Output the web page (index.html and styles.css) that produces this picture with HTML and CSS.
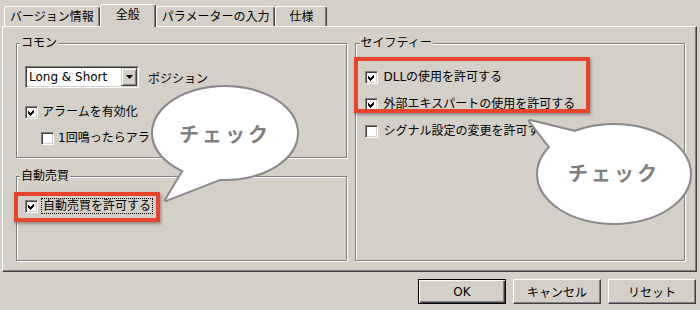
FILE: index.html
```html
<!DOCTYPE html>
<html lang="ja">
<head>
    <meta charset="UTF-8">
    <meta name="viewport" content="width=device-width, initial-scale=1.0">
    <title>全般</title>
    <link rel="stylesheet" href="styles.css">
</head>
<body>
    <div class="dialog">
        <div class="tabs">
            <div class="tab">バージョン情報</div>
            <div class="tab active">全般</div>
            <div class="tab">パラメーターの入力</div>
            <div class="tab short">仕様</div>
        </div>

        <div class="panel">
            <div class="col">
                <fieldset class="group common">
                    <legend>コモン</legend>
                    <div class="select-row">
                        <div class="select">
                            <span class="select-value">Long &amp; Short</span>
                            <span class="select-btn">
                                <svg width="7" height="4" viewBox="0 0 7 4"><polygon points="0,0 7,0 3.5,4" fill="#000"/></svg>
                            </span>
                        </div>
                        <span class="select-label">ポジション</span>
                    </div>
                    <label class="check alarm">
                        <span class="box"><svg class="tick" width="7" height="7" viewBox="0 0 7 7"><polygon points="0,2 2,4 6,0 6,3 2,7 0,5"/></svg></span>
                        アラームを有効化
                    </label>
                    <label class="check sub">
                        <span class="box"></span>
                        1回鳴ったらアラ
                    </label>
                </fieldset>

                <fieldset class="group auto">
                    <legend>自動売買</legend>
                    <label class="check">
                        <span class="box"><svg class="tick" width="7" height="7" viewBox="0 0 7 7"><polygon points="0,2 2,4 6,0 6,3 2,7 0,5"/></svg></span>
                        <span class="focus">自動売買を許可する</span>
                    </label>
                </fieldset>
            </div>

            <fieldset class="group safety">
                <legend>セイフティー</legend>
                <label class="check">
                    <span class="box"><svg class="tick" width="7" height="7" viewBox="0 0 7 7"><polygon points="0,2 2,4 6,0 6,3 2,7 0,5"/></svg></span>
                    DLLの使用を許可する
                </label>
                <label class="check">
                    <span class="box"><svg class="tick" width="7" height="7" viewBox="0 0 7 7"><polygon points="0,2 2,4 6,0 6,3 2,7 0,5"/></svg></span>
                    外部エキスパートの使用を許可する
                </label>
                <label class="check">
                    <span class="box"></span>
                    シグナル設定の変更を許可する
                </label>
            </fieldset>
        </div>

        <div class="buttons">
            <button class="btn default">OK</button>
            <button class="btn">キャンセル</button>
            <button class="btn">リセット</button>
        </div>

        <!-- annotations drawn over the dialog -->
        <div class="mark mark-auto"></div>
        <div class="mark mark-safety"></div>

        <svg class="callouts" width="700" height="310" viewBox="0 0 700 310">
            <g class="bubble">
                <ellipse cx="225" cy="133" rx="72" ry="46"/>
                <polygon points="190,160 166,200 238,172"/>
                <ellipse class="fill" cx="225" cy="133" rx="72" ry="46"/>
                <polygon class="fill" points="190,160 166,200 238,172"/>
                <text x="225" y="142">チェック</text>
            </g>
            <g class="bubble">
                <ellipse cx="614" cy="174" rx="76" ry="49"/>
                <polygon points="560,160 530,121 600,138"/>
                <ellipse class="fill" cx="614" cy="174" rx="76" ry="49"/>
                <polygon class="fill" points="560,160 530,121 600,138"/>
                <text x="614" y="181">チェック</text>
            </g>
        </svg>
    </div>
</body>
</html>
```

FILE: styles.css
```css
body {
    margin: 0;
    background-color: #d4d0c8;
    font-family: "DejaVu Sans", "Noto Sans CJK JP", sans-serif;
    font-size: 12px;
    color: #000;
}

.dialog {
    position: relative;
    width: 700px;
    height: 310px;
    overflow: hidden;
}

/* tabs */
.tabs {
    display: flex;
    align-items: flex-end;
    height: 26px;
    padding: 4px 0 0 4px;
    box-sizing: border-box;
}

.tab {
    display: flex;
    align-items: center;
    height: 20px;
    padding: 0 5px;
    box-sizing: border-box;
    line-height: 16px;
    border-top: 1px solid #fff;
    border-left: 1px solid #fff;
    border-right: 1px solid #404040;
    border-radius: 3px 3px 0 0;
    box-shadow: inset -1px 0 0 #808080;
    white-space: nowrap;
}

.tab.short {
    padding: 0 13px;
}

.tab.active {
    position: relative;
    z-index: 1;
    height: 23px;
    margin-bottom: -1px;
    padding: 0 15px 2px;
    background-color: #d4d0c8;
}

/* panel */
.panel {
    display: grid;
    grid-template-columns: 1fr 1fr;
    column-gap: 8px;
    height: 246px;
    margin: 0 3px 0 2px;
    padding: 8px 11px 10px 13px;
    box-sizing: border-box;
    border: 1px solid;
    border-color: #fff #404040 #404040 #fff;
    box-shadow: inset -1px -1px 0 #808080;
}

.col {
    display: flex;
    flex-direction: column;
    gap: 10px;
}

.group {
    margin: 0;
    padding: 0 8px;
    min-width: 0;
    box-sizing: border-box;
    border: 1px solid #808080;
    box-shadow: 1px 1px 0 #fff, inset 1px 1px 0 #fff;
}

.group legend {
    margin-left: -5px;
    padding: 0 1px;
    line-height: 16px;
    background-color: #d4d0c8;
}

.common {
    height: 123px;
    padding-top: 15px;
}

.auto {
    flex: 1;
    padding-top: 14px;
}

.safety {
    padding-top: 18px;
    padding-left: 9px;
}

/* combo box */
.select-row {
    display: flex;
    align-items: center;
}

.select {
    display: flex;
    width: 114px;
    height: 22px;
    box-sizing: border-box;
    background-color: #fff;
    border: 1px solid;
    border-color: #808080 #fff #fff #808080;
    box-shadow: inset 1px 1px 0 #404040, inset -1px -1px 0 #d4d0c8;
}

.select-value {
    flex: 1;
    padding-left: 3px;
    line-height: 20px;
    white-space: nowrap;
}

.select-btn {
    display: flex;
    align-items: center;
    justify-content: center;
    width: 16px;
    margin: 1px;
    box-sizing: border-box;
    background-color: #d4d0c8;
    border: 1px solid;
    border-color: #d4d0c8 #404040 #404040 #d4d0c8;
    box-shadow: inset 1px 1px 0 #fff, inset -1px -1px 0 #808080;
}

.select-label {
    margin-left: 9px;
}

/* check boxes */
.check {
    display: flex;
    align-items: center;
    gap: 4px;
    height: 16px;
    line-height: 16px;
    white-space: nowrap;
}

.safety .check {
    gap: 6px;
}

.alarm {
    margin-top: 16px;
}

.sub {
    margin-top: 10px;
    margin-left: 16px;
}

.safety .check + .check {
    margin-top: 11px;
}

.box {
    display: flex;
    align-items: center;
    justify-content: center;
    flex: none;
    width: 13px;
    height: 13px;
    box-sizing: border-box;
    background-color: #fff;
    border: 1px solid;
    border-color: #808080 #fff #fff #808080;
    box-shadow: inset 1px 1px 0 #404040, inset -1px -1px 0 #d4d0c8;
}

.tick {
    fill: #000;
    shape-rendering: crispEdges;
}

.focus {
    padding: 0 1px;
    line-height: 14px;
    outline: 1px dotted #000;
}

/* buttons */
.buttons {
    display: flex;
    justify-content: flex-end;
    gap: 7px;
    margin-top: 7px;
    padding-right: 4px;
}

.btn {
    width: 88px;
    height: 25px;
    padding: 0;
    font-family: inherit;
    font-size: 12px;
    color: #000;
    background-color: #d4d0c8;
    border: 1px solid;
    border-color: #fff #404040 #404040 #fff;
    box-shadow: inset -1px -1px 0 #808080;
}

.btn.default {
    border-color: #000;
    box-shadow: inset 1px 1px 0 #fff, inset -1px -1px 0 #404040, inset -2px -2px 0 #808080;
}

/* annotations */
.mark {
    position: absolute;
    box-sizing: border-box;
    border: 4px solid #e8432d;
    box-shadow: 1px 2px 3px rgba(0, 0, 0, 0.35);
}

.mark-auto {
    left: 14px;
    top: 192px;
    width: 146px;
    height: 30px;
}

.mark-safety {
    left: 354px;
    top: 57px;
    width: 236px;
    height: 56px;
}

.callouts {
    position: absolute;
    left: 0;
    top: 0;
    pointer-events: none;
}

.bubble ellipse,
.bubble polygon {
    fill: #fff;
    stroke: #8a8a8a;
    stroke-width: 4;
    stroke-linejoin: round;
}

.bubble .fill {
    stroke: none;
}

.bubble text {
    font-family: "Noto Sans CJK JP", sans-serif;
    font-size: 20px;
    font-weight: 700;
    letter-spacing: 3px;
    fill: #808080;
    text-anchor: middle;
}
```
